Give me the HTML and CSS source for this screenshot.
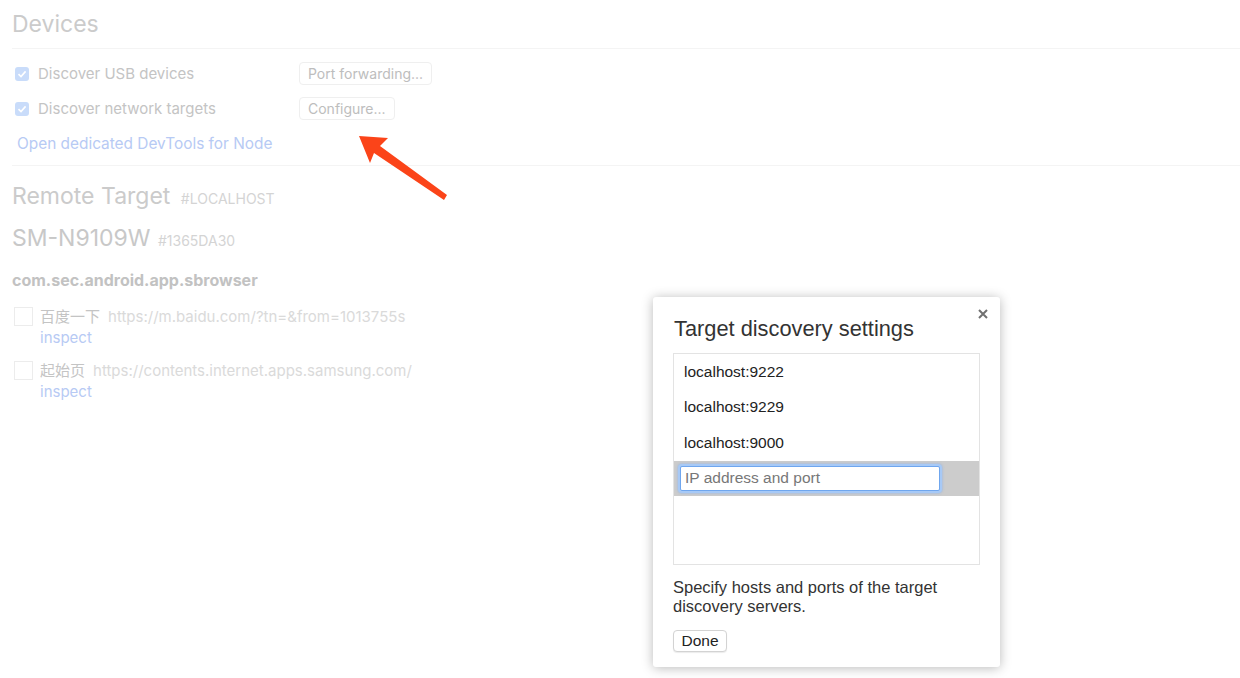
FILE: index.html
```html
<!DOCTYPE html>
<html lang="en">
<head>
    <meta charset="UTF-8">
    <title>Remote devices</title>
    <link rel="stylesheet" href="styles.css">
</head>
<body>
    <div class="page">
        <section class="devices">
            <h2 class="section-title">Devices</h2>
            <div class="option-row">
                <label class="option">
                    <span class="box checked"><svg width="10" height="10" viewBox="0 0 10 10"><path d="M1.5 5.2 L4 7.6 L8.6 2.4" fill="none" stroke="#fff" stroke-width="1.6"/></svg></span>
                    Discover USB devices
                </label>
                <button class="btn">Port forwarding...</button>
            </div>
            <div class="option-row">
                <label class="option">
                    <span class="box checked"><svg width="10" height="10" viewBox="0 0 10 10"><path d="M1.5 5.2 L4 7.6 L8.6 2.4" fill="none" stroke="#fff" stroke-width="1.6"/></svg></span>
                    Discover network targets
                </label>
                <button class="btn">Configure...</button>
            </div>
            <div class="option-row">
                <a class="link node-link">Open dedicated DevTools for Node</a>
            </div>
        </section>

        <section class="remote">
            <h2 class="section-title remote-title">Remote Target <span class="tag">#LOCALHOST</span></h2>
            <h3 class="device-name">SM-N9109W <span class="tag">#1365DA30</span></h3>
            <div class="browser-name">com.sec.android.app.sbrowser</div>

            <div class="target">
                <span class="target-box"></span>
                <div>
                    <div class="target-line"><span class="target-name">百度一下</span><span class="target-url">https://m.baidu.com/?tn=&amp;from=1013755s</span></div>
                    <a class="link">inspect</a>
                </div>
            </div>
            <div class="target">
                <span class="target-box"></span>
                <div>
                    <div class="target-line"><span class="target-name">起始页</span><span class="target-url">https://contents.internet.apps.samsung.com/</span></div>
                    <a class="link">inspect</a>
                </div>
            </div>
        </section>
    </div>

    <svg class="arrow" width="100" height="80" viewBox="350 128 100 80">
        <polygon points="359,136 388,138 380,146 447,195 444,200 374,153 370,163" fill="#fb4419"/>
    </svg>

    <div class="dialog">
        <svg class="close" width="10" height="10" viewBox="0 0 10 10"><path d="M1 1 L9 9 M9 1 L1 9" stroke="#707070" stroke-width="2"/></svg>
        <h2 class="dialog-title">Target discovery settings</h2>
        <div class="host-list">
            <div class="host">localhost:9222</div>
            <div class="host">localhost:9229</div>
            <div class="host">localhost:9000</div>
            <div class="host selected"><input class="host-input" type="text" placeholder="IP address and port"></div>
        </div>
        <p class="hint">Specify hosts and ports of the target discovery servers.</p>
        <button class="done">Done</button>
    </div>
</body>
</html>
```

FILE: styles.css
```css
body {
    margin: 0;
    background: #fff;
    font-family: Inter, "Noto Sans", sans-serif;
    color: #c6c6c6;
}
.page { padding-left: 12px; }

.section-title {
    margin: 0;
    font-size: 23px;
    font-weight: 400;
    line-height: 48px;
    color: #cbcbcb;
}
.devices { border-bottom: 1px solid #f4f4f4; padding-bottom: 4px; }
.devices .section-title { border-bottom: 1px solid #f4f4f4; }
.devices .section-title + .option-row { margin-top: 7px; }

.option-row { display: flex; align-items: center; height: 35px; }
.option {
    display: flex;
    align-items: center;
    width: 284px;
    padding-left: 3px;
    font-size: 15px;
    color: #c4c4c4;
}
.box {
    width: 14px; height: 14px;
    margin-right: 9px;
    border-radius: 3px;
    display: flex; align-items: center; justify-content: center;
}
.box.checked { background: #c9dcfa; }
.btn {
    font-family: inherit;
    font-size: 14px;
    color: #bdbdbd;
    background: #fff;
    border: 1px solid #efefef;
    border-radius: 4px;
    height: 23px;
    padding: 0 8px;
}
.link { color: #b7caf4; font-size: 15px; cursor: pointer; }
.node-link { padding-left: 5px; font-size: 15.4px; }

.remote-title { margin-top: 8px; line-height: 44px; }
.tag { font-size: 14px; color: #d4d4d4; margin-left: 4px; }
.device-name {
    margin: -4px 0 0 0;
    font-size: 23px;
    font-weight: 400;
    line-height: 42px;
    color: #c8c8c8;
}
.device-name .tag { margin-left: 1px; }
.browser-name {
    font-size: 16px;
    font-weight: 700;
    line-height: 36px;
    color: #c2c2c2;
}
.target { display: flex; margin-top: 8px; line-height: 21px; }
.target + .target { margin-top: 12px; }
.target-box {
    width: 17px; height: 17px;
    border: 1px solid #ececec;
    margin: 1px 7px 0 2px;
}
.target-line { font-size: 15px; }
.target-name { font-family: Inter, "Noto Sans CJK SC", sans-serif; color: #c4c4c4; margin-right: 8px; }
.target-url { color: #dadada; }

.arrow { position: absolute; left: 350px; top: 128px; }

.dialog {
    position: absolute;
    left: 653px;
    top: 297px;
    width: 347px;
    height: 370px;
    box-sizing: border-box;
    padding: 20px 20px 15px 20px;
    background: #fff;
    border-radius: 3px;
    box-shadow: 0 1px 12px rgba(0, 0, 0, 0.28);
    font-family: "Liberation Sans", Arial, sans-serif;
    color: #333;
}
.close { position: absolute; right: 12px; top: 12px; }
.dialog-title {
    margin: 0 0 12px 1px;
    font-size: 21.8px;
    font-weight: 400;
    line-height: 24px;
    color: #333;
}
.host-list {
    height: 210px;
    border: 1px solid #e3e3e3;
}
.host {
    height: 35.5px;
    display: flex;
    align-items: center;
    padding-left: 10px;
    font-size: 15.5px;
    color: #222;
}
.host.selected { background: #cccccc; padding-left: 6px; }
.host-input {
    width: 250px;
    height: 23px;
    padding: 0 4px;
    font-family: inherit;
    font-size: 15.5px;
    border: 1px solid #6fa6ee;
    border-radius: 2px;
    box-shadow: 0 0 0 2px #a7c9f6, 0 0 2px 3px rgba(120, 170, 240, 0.35);
    outline: none;
}
.host-input::placeholder { color: #777; }
.hint {
    margin: 13px 0 14px 0;
    font-size: 16.5px;
    line-height: 19px;
    color: #333;
    width: 300px;
}
.done {
    font-family: inherit;
    font-size: 15.5px;
    color: #222;
    background: #fff;
    border: 1px solid #d3d3d3;
    border-radius: 4px;
    height: 22px;
    width: 54px;
    padding: 0;
    box-shadow: 0 1px 1px rgba(0, 0, 0, 0.08);
}
```
